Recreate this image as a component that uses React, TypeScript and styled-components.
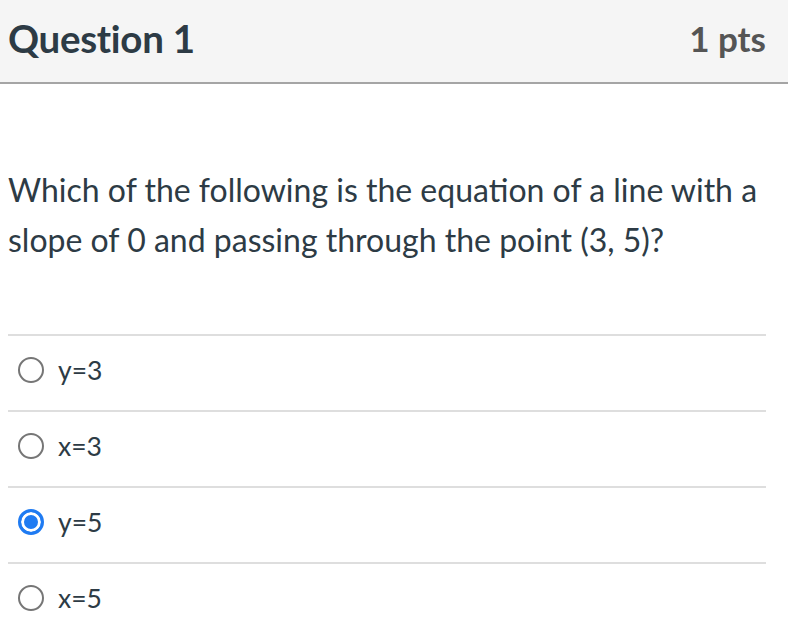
import React, { useState } from 'react';
import styled, { createGlobalStyle } from 'styled-components';

const GlobalStyle = createGlobalStyle`
    html, body {
        margin: 0;
        padding: 0;
        background: #fff;
    }
    body {
        font-family: Lato, 'Noto Sans', sans-serif;
        color: #2d3b45;
    }
`;

const answers = ['y=3', 'x=3', 'y=5', 'x=5'];

const App = (): JSX.Element => {
    const [selected, setSelected] = useState<number>(2);

    return (
        <>
            <GlobalStyle />
            <Page>
                <Header>
                    <Title>Question 1</Title>
                    <Points>1 pts</Points>
                </Header>
                <Body>
                    <QuestionText>
                        Which of the following is the equation of a line with a slope of 0 and
                        passing through the point (3, 5)?
                    </QuestionText>
                    <AnswerList>
                        {answers.map((a, i) => (
                            <AnswerRow key={a} onClick={() => setSelected(i)}>
                                <Radio checked={selected === i} />
                                <AnswerLabel>{a}</AnswerLabel>
                            </AnswerRow>
                        ))}
                    </AnswerList>
                </Body>
            </Page>
        </>
    );
};

const Page = styled.div`
    width: 788px;
`;

const Header = styled.div`
    display: flex;
    justify-content: space-between;
    align-items: center;
    height: 84px;
    padding: 0 22px 6px 8px;
    background-color: #f5f5f5;
    border-bottom: 2px solid #a5a5a5;
    box-sizing: border-box;
`;

const Title = styled.h2`
    margin: 0;
    font-size: 38.5px;
    font-weight: 700;
    color: #2d3b45;
    letter-spacing: -0.3px;
`;

const Points = styled.div`
    font-size: 35px;
    font-weight: 700;
    color: #555;
`;

const Body = styled.div`
    padding: 0 22px 0 8px;
`;

const QuestionText = styled.p`
    margin: 0;
    padding: 81px 0 69px;
    font-size: 32px;
    line-height: 50px;
    color: #2d3b45;
`;

const AnswerList = styled.div`
    display: flex;
    flex-direction: column;
`;

const AnswerRow = styled.label`
    display: flex;
    align-items: center;
    gap: 14px;
    height: 74px;
    padding: 0 0 6px 10px;
    box-sizing: content-box;
    height: 68px;
    border-top: 2px solid #dedede;
    cursor: pointer;
`;

const Radio = styled.span<{ checked: boolean }>`
    width: 26px;
    height: 26px;
    box-sizing: border-box;
    border-radius: 50%;
    border: ${(p) => (p.checked ? '3px solid #1f7bf2' : '2px solid #767676')};
    background-color: ${(p) => (p.checked ? '#1f7bf2' : '#fff')};
    box-shadow: ${(p) => (p.checked ? 'inset 0 0 0 3px #fff' : 'none')};
    flex-shrink: 0;
`;

const AnswerLabel = styled.span`
    font-size: 26.5px;
    color: #2d3b45;
`;

export default App;
